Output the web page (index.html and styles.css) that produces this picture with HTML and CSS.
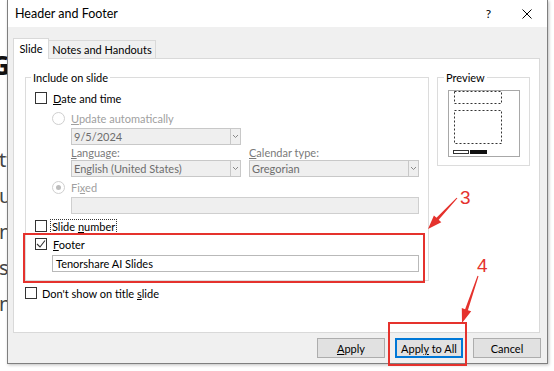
FILE: index.html
```html
<!DOCTYPE html>
<html lang="en">
<head>
  <meta charset="UTF-8" />
  <meta name="viewport" content="width=device-width, initial-scale=1.0" />
  <title>Header and Footer</title>
  <link rel="stylesheet" href="styles.css">
</head>
<body>
  <!-- page behind the dialog, only a sliver shows -->
  <div class="backdrop">
    <div class="bd-head">G</div>
    <div class="bd-line">ttings</div>
    <div class="bd-line">uide</div>
    <div class="bd-line">ne</div>
    <div class="bd-line">s</div>
    <div class="bd-line">n</div>
  </div>

  <div class="dialog">
    <div class="titlebar">
      <span class="title">Header and Footer</span>
      <span class="help">?</span>
      <svg class="close" width="10" height="10" viewBox="0 0 10 10">
        <path d="M0.5 0.5 L9.5 9.5 M9.5 0.5 L0.5 9.5" stroke="#000" stroke-width="1" fill="none"/>
      </svg>
    </div>

    <div class="tabs">
      <div class="tab active">Slide</div>
      <div class="tab">Notes and Handouts</div>
    </div>

    <div class="panel">
      <div class="top-row">
        <div class="group include">
          <span class="legend">Include on slide</span>
          <div class="row"><span class="cb"></span><span><u>D</u>ate and time</span></div>
          <div class="row indent1 off mt4"><span class="rb"></span><span><u>U</u>pdate automatically</span></div>
          <div class="combo indent2 mt2"><span class="val">9/5/2024</span><span class="arrow"><svg width="7" height="5" viewBox="0 0 7 5"><path d="M1 1 L3.5 3.5 L6 1" stroke="#888" fill="none"/></svg></span></div>
          <div class="pair labels indent2">
            <span class="lbl"><u>L</u>anguage:</span>
            <span class="lbl"><u>C</u>alendar type:</span>
          </div>
          <div class="pair indent2">
            <div class="combo"><span class="val">English (United States)</span><span class="arrow"><svg width="7" height="5" viewBox="0 0 7 5"><path d="M1 1 L3.5 3.5 L6 1" stroke="#888" fill="none"/></svg></span></div>
            <div class="combo"><span class="val">Gregorian</span><span class="arrow"><svg width="7" height="5" viewBox="0 0 7 5"><path d="M1 1 L3.5 3.5 L6 1" stroke="#888" fill="none"/></svg></span></div>
          </div>
          <div class="row indent1 off mt2"><span class="rb on"></span><span>Fi<u>x</u>ed</span></div>
          <div class="textbox disabled indent2 mt2"></div>
          <div class="row mt4"><span class="cb slim"></span><span class="focus">Slide <u>n</u>umber</span></div>
          <div class="row mt2">
            <span class="cb"><svg width="10" height="10" viewBox="0 0 10 10"><path d="M1 5 L4 8 L9 1.5" stroke="#333" stroke-width="1.1" fill="none"/></svg></span>
            <span><u>F</u>ooter</span>
          </div>
          <div class="textbox indent1 mt3">Tenorshare AI Slides</div>
        </div>

        <div class="group preview">
          <span class="legend">Preview</span>
          <div class="thumb">
            <svg width="70" height="65" viewBox="0 0 70 65">
              <rect x="5.5" y="0.5" width="47" height="12" fill="none" stroke="#333" stroke-dasharray="2 2"/>
              <rect x="5.5" y="19.5" width="47" height="33" fill="none" stroke="#333" stroke-dasharray="2 2"/>
              <rect x="4.5" y="59.5" width="15" height="3" fill="#fff" stroke="#333"/>
              <rect x="21" y="59" width="17" height="4" fill="#111"/>
            </svg>
          </div>
        </div>
      </div>
      <div class="row mt4"><span class="cb loose"></span><span>Don't show on title <u>s</u>lide</span></div>
    </div>

    <div class="buttons">
      <button class="btn"><u>A</u>pply</button>
      <button class="btn default">Appl<u>y</u> to All</button>
      <button class="btn">Cancel</button>
    </div>
  </div>

  <!-- tutorial annotations -->
  <svg class="marks" width="554" height="371" viewBox="0 0 554 371">
    <rect x="24" y="234" width="400" height="48" fill="none" stroke="#e5322d" stroke-width="2"/>
    <rect x="389" y="323" width="77" height="42" fill="none" stroke="#e5322d" stroke-width="2"/>
    <polygon points="428,229 433.9,215.4 436.5,217.8 456.6,197.7 457.4,198.3 438.7,219.8 441.3,222.2" fill="#e5322d"/>
    <polygon points="462,323 461.8,308.1 465.1,309.2 477.5,275.8 478.5,276.2 467.9,310.2 471.2,311.3" fill="#e5322d"/>
    <text x="460" y="204" class="num">3</text>
    <text x="477" y="272" class="num">4</text>
  </svg>
</body>
</html>
```

FILE: styles.css
```css
* { margin: 0; padding: 0; box-sizing: border-box; }
html, body {
  width: 554px; height: 371px; overflow: hidden;
  background: #fff; font-family: 'Lato', 'Noto Sans', sans-serif;
}
body { position: relative; }

.backdrop {
  position: absolute; top: 0; left: 0;
  font-family: 'Noto Sans', sans-serif;
  color: #444; font-size: 20px; line-height: 36px;
}
.bd-head {
  margin: 50px 0 0 -9px;
  font-size: 26px; font-weight: bold; color: #111; line-height: 30px;
}
.bd-line { margin-left: -1px; }
.bd-head + .bd-line { margin-top: 62px; }

.dialog {
  position: absolute; top: 0; left: 7px;
  width: 541px; height: 364px;
  background: #f0f0f0;
  border: 1px solid #7f7f7f; border-top: 0;
  box-shadow: 1px 1px 3px rgba(0,0,0,0.25);
  font-size: 11px; color: #000;
  white-space: nowrap;
}
u { text-decoration: underline; text-underline-offset: 1px; }

.titlebar {
  height: 27px; background: #fff;
  display: flex; align-items: center;
  padding-left: 7px;
}
.title { flex: 1; font-size: 12.5px; }
.help { font-size: 12px; }
.close { margin: 0 15px 0 31px; }

.tabs {
  display: flex; align-items: flex-end;
  height: 20px; margin: 11px 0 0 5px;
  position: relative; z-index: 1;
}
.tab {
  height: 18px; line-height: 17px; text-align: center;
  border: 1px solid #d9d9d9; border-bottom: 0;
  background: #f0f0f0;
  width: 108px; margin-left: -1px;
}
.tab.active {
  width: 36px; height: 21px; margin: 0 0 -1px 0;
  background: #fff; line-height: 19px;
}

.panel {
  width: 527px; height: 275px; margin-left: 5px;
  background: #fff; border: 1px solid #d9d9d9;
  padding: 18px 0 0 11px;
}
.top-row { display: flex; align-items: flex-start; gap: 8px; }

.group {
  position: relative;
  border: 1px solid #dcdcdc;
}
.group.include { width: 404px; padding: 12px 9px 8px 9px; }
.group.preview { width: 93px; height: 89px; padding: 12px 0 0 10px; }
.legend {
  position: absolute; top: -8px; left: 5px;
  background: #fff; padding: 0 2px; line-height: 15px;
}
.preview .legend { left: 6px; }

.row { display: flex; align-items: center; height: 16px; }
.mt2 { margin-top: 2px; }
.mt3 { margin-top: 3px; }
.mt4 { margin-top: 4px; }
.indent1 { margin-left: 17px; }
.indent2 { margin-left: 36px; }
.off { color: #a0a0a0; }

.cb {
  width: 12px; height: 12px; flex: none;
  border: 1px solid #333; background: #fff;
  margin-right: 6px;
  display: flex; align-items: center; justify-content: center;
}
.cb.slim { margin-right: 3px; }
.cb.loose { margin-right: 5px; }
.focus { border: 1px dotted #333; padding: 0 1px; line-height: 13px; }

.rb {
  width: 13px; height: 13px; flex: none;
  border: 1px solid #cfcfcf; border-radius: 50%;
  background: #fff; margin-right: 6px;
  display: flex; align-items: center; justify-content: center;
}
.rb.on::after {
  content: ""; width: 5px; height: 5px; border-radius: 50%;
  background: #bdbdbd;
}

.combo {
  width: 170px; height: 17px;
  display: flex;
  border: 1px solid #c8c8c8; background: #efefef;
  color: #6d6d6d;
}
.combo .val { flex: 1; padding-left: 2px; line-height: 15px; }
.combo .arrow {
  width: 10px; border-left: 1px solid #c8c8c8;
  display: flex; align-items: center; justify-content: center;
}
.pair { display: flex; gap: 8px; }
.pair.labels { height: 15px; line-height: 15px; color: #7a7a7a; }
.pair.labels .lbl { width: 170px; }

.textbox {
  height: 17px; width: 367px;
  border: 1px solid #b9b9b9; background: #fff;
  padding-left: 3px; line-height: 15px;
}
.textbox.disabled { width: 348px; background: #efefef; border-color: #cfcfcf; }

.thumb {
  width: 72px; height: 67px;
  border: 1px solid #a8a8a8; background: #fff;
}
.thumb svg { display: block; }

.buttons {
  display: flex; justify-content: flex-end; gap: 10px;
  margin-top: 5px; padding-right: 6px;
}
.btn {
  width: 68px; height: 20px;
  font-family: inherit; font-size: 11px; color: #000;
  background: #e1e1e1; border: 1px solid #adadad;
}
.btn.default { border: 2px solid #0078d7; }

.marks { position: absolute; top: 0; left: 0; pointer-events: none; }
.num { font-family: 'Liberation Sans', sans-serif; font-size: 19px; fill: #e5322d; }
```
